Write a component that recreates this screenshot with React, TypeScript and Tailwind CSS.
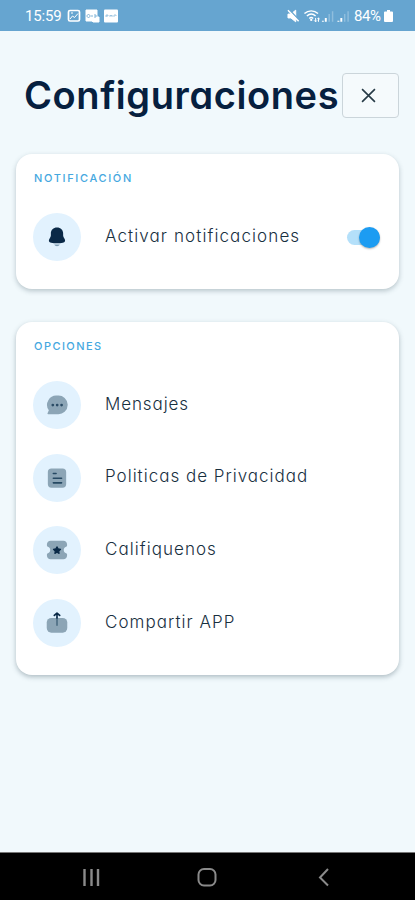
import { useState, type ReactNode } from "react";

function BellIcon() {
  return (
    <svg width="22" height="22" viewBox="0 0 24 24">
      <path d="M12 1.500C8 1.500 5.300 4.300 5.300 8.100v2.100c0 1.200-.5 2-1.200 3.200-1.800 2.900-.8 4.400 1.500 4.800 4 .8 8.800.8 12.800 0 2.300-.4 3.300-1.900 1.500-4.800-.7-1.200-1.200-2-1.200-3.200V8.100C18.700 4.300 16 1.500 12 1.500Z" fill="#0a2947" />
      <path d="M9 20.300h6c-.6 1.200-1.600 1.700-3 1.700s-2.400-.5-3-1.700Z" fill="#7d9bb2" />
    </svg>
  );
}

function MessageIcon() {
  return (
    <svg width="22" height="22" viewBox="0 0 24 24">
      <path d="M12.500 1.700A10.200 10.200 0 1 1 12.500 22H2.400c-.8 0-1-.7-.6-1.300l1.300-2.900A10.200 10.200 0 0 1 12.500 1.700Z" fill="#8ca5b6" />
      <circle cx="7.400" cy="12" r="1.500" fill="#2b4c66" />
      <circle cx="12.200" cy="12" r="1.500" fill="#2b4c66" />
      <circle cx="17" cy="12" r="1.500" fill="#2b4c66" />
    </svg>
  );
}

function DocumentIcon() {
  return (
    <svg width="22" height="22" viewBox="0 0 24 24">
      <rect x="2" y="1.500" width="20" height="21" rx="4" fill="#8ca5b6" />
      <path d="M8 7h3M8 12.300h9M8 17.300h9" stroke="#264963" strokeWidth="1.700" strokeLinecap="round" />
    </svg>
  );
}

function TicketIcon() {
  return (
    <svg width="22" height="22" viewBox="0 0 24 24">
      <path d="M5 2h14c2.200 0 4 1.500 4 4v1c0 .8-.4 1.200-1 1.400-3.500 1-3.500 6.200 0 7.200.6.2 1 .6 1 1.400v1c0 2.500-1.800 4-4 4H5c-2.200 0-4-1.500-4-4v-1c0-.8.4-1.200 1-1.400 3.500-1 3.500-6.200 0-7.200C1.400 8.200 1 7.800 1 7V6c0-2.500 1.800-4 4-4Z" fill="#8ca5b6" />
      <path d="m12 8.500 1.200 2.200 2.700.5-1.900 1.900.3 2.600-2.300-1.200-2.300 1.200.3-2.600-1.900-1.900 2.700-.5Z" fill="#0a2947" stroke="#0a2947" strokeWidth="1.200" strokeLinejoin="round" />
    </svg>
  );
}

function ShareIcon() {
  return (
    <svg width="22" height="22" viewBox="0 0 24 24">
      <rect x="0.800" y="6.500" width="22.400" height="16" rx="5" fill="#8ca5b6" />
      <path d="M12 6.500v8" stroke="#496a80" strokeWidth="1.700" strokeLinecap="round" />
      <path d="M12 6.500V2M9.100 3.800 12 1.200l2.900 2.600" fill="none" stroke="#0a2947" strokeWidth="1.800" strokeLinecap="round" strokeLinejoin="round" />
    </svg>
  );
}

function StatusBar() {
  return (
    <header className="flex h-[31px] shrink-0 items-center bg-[#66a5d0] pr-[22px] pl-[25px] pt-[1px] text-white">
      <span className="w-[37px] font-[Roboto,sans-serif] text-[15px] tracking-[-0.15px]">15:59</span>
      <svg className="ml-[5px]" width="52" height="14" viewBox="0 0 52 14">
        <rect x="1.500" y="1.500" width="11" height="10.500" rx="1.500" fill="none" stroke="white" strokeWidth="1.700" />
        <path d="m3 10 2.500-3 2 1.500L11 4.500M4 4h2" fill="none" stroke="white" />
        <path d="M19 1h11v7h2v5h-6l-1-1h-6Z" fill="white" stroke="white" strokeLinejoin="round" />
        <path d="M20 7c0-2 3-2 3 0s-3 2-3 0m4 0h2m1-1h2v2h-2" fill="none" stroke="#7fb3d7" />
        <rect x="37" y="0.500" width="14" height="13" rx="1" fill="white" />
        <path d="M39 8V6h2v1h-2m4 1V6l1 1 1-1v2m2 0V6h2v1" fill="none" stroke="#91bddc" strokeWidth=".8" />
      </svg>
      <svg className="ml-auto" width="64" height="16" viewBox="0 0 66 16">
        <path d="M1 6h3l5-4v12l-5-4H1Z" fill="white" stroke="white" />
        <path d="m2 1 11 12" stroke="#66a5d0" strokeWidth="1.500" />
        <path d="m1 2 11 11.500" stroke="white" strokeWidth="1.500" />
        <path d="M18 5.500c4-3.700 10-3.700 14 0M20.500 8c2.700-2.500 6.300-2.500 9 0M23 10.500c1.300-1.200 2.700-1.200 4 0" fill="none" stroke="white" strokeWidth="1.500" />
        <circle cx="25" cy="12" r="1.200" fill="white" />
        <path d="M29.500 10v4m-1.500-1.500 1.500 1.500 1.500-1.500M32.500 14v-4m-1.300 1.300 1.300-1.300 1.300 1.300" fill="none" stroke="white" />
        <path d="M37 13v1M40 10v4M53 13v1M56 10v4" stroke="white" strokeWidth="2" />
        <path d="M43.500 6v8M47 3v11M59.500 6v8M63 3v11" stroke="#8fbedd" strokeWidth="1.500" />
      </svg>
      <span className="ml-[3px] w-[29px] font-[Roboto,sans-serif] text-[15px] tracking-[-0.4px]">84%</span>
      <svg className="ml-[1px]" width="9" height="12" viewBox="0 0 9 12">
        <path d="M3 0h3v1.500h2q1 0 1 1V11q0 1-1 1H1q-1 0-1-1V2.500q0-1 1-1h2Z" fill="white" />
      </svg>
    </header>
  );
}

function Row({ icon, label, tracking, children }: { icon: ReactNode; label: string; tracking: string; children?: ReactNode }) {
  return (
    <div className="flex h-12 items-center">
      <span className="flex size-12 shrink-0 items-center justify-center rounded-full bg-[#e2f2fe]">{icon}</span>
      <span className={`ml-6 -mt-[1px] whitespace-nowrap text-[17px] font-light text-[#18303f] ${tracking}`}>{label}</span>
      {children}
    </div>
  );
}

const options = [
  { label: "Mensajes", icon: <MessageIcon />, tracking: "tracking-[0.9px]" },
  { label: "Politicas de Privacidad", icon: <DocumentIcon />, tracking: "tracking-[1px]" },
  { label: "Califiquenos", icon: <TicketIcon />, tracking: "tracking-[1.050px]" },
  { label: "Compartir APP", icon: <ShareIcon />, tracking: "tracking-[1.050px]" },
];

export default function App() {
  const [enabled, setEnabled] = useState(true);
  return (
    <div className="flex h-[900px] w-[415px] flex-col overflow-hidden bg-[#f1f9fc] font-[Inter,sans-serif] [font-feature-settings:'cv11']">
      <StatusBar />
      <main className="flex flex-1 flex-col px-4">
        <div className="mt-[42px] flex h-[45px] items-center justify-between pl-[8px]">
          <h1 className="whitespace-nowrap text-[38px] leading-[45px] font-semibold tracking-[0.6px] text-[#06203f]">Configuraciones</h1>
          <button aria-label="Cerrar" className="flex h-[45px] w-[57px] shrink-0 items-center justify-center rounded-[4px] border border-[#cbd5da] bg-[#f5fafc] pr-[4px] text-[#263a46]">
            <svg width="15" height="15" viewBox="0 0 14 14">
              <path d="m1 1 12 12M13 1 1 13" stroke="currentColor" strokeWidth="1.500" />
            </svg>
          </button>
        </div>

        <section className="mt-[36px] h-[135px] rounded-[16px] bg-white px-[17px] pt-[17px] shadow-[0_2px_5px_rgba(50,75,90,0.3)]">
          <h2 className="pl-[1px] text-[11px] leading-[15px] font-medium tracking-[1.650px] text-[#45a8df]">NOTIFICACIÓN</h2>
          <div className="mt-[27px]">
            <Row icon={<BellIcon />} label="Activar notificaciones" tracking="tracking-[1.100px]">
              <button role="switch" aria-label="Activar notificaciones" aria-checked={enabled} onClick={() => setEnabled(!enabled)} className={`mr-[2px] ml-auto flex h-[15px] w-[33px] shrink-0 items-center rounded-full bg-[#b4e0fa] ${enabled ? "justify-end" : "justify-start"}`}>
                <span className="size-[21px] shrink-0 rounded-full bg-[#1c9cf2] shadow-[0_1px_2px_rgba(0,0,0,0.3)]" />
              </button>
            </Row>
          </div>
        </section>

        <section className="mt-[33px] h-[353px] rounded-[16px] bg-white px-[17px] pt-[17px] shadow-[0_2px_5px_rgba(50,75,90,0.35)]">
          <h2 className="pl-[1px] text-[11px] leading-[15px] font-medium tracking-[1.450px] text-[#45a8df]">OPCIONES</h2>
          <div className="mt-[27px] flex flex-col gap-[24.700px]">
            {options.map((option) => <Row key={option.label} {...option} />)}
          </div>
        </section>
      </main>
      <nav className="flex h-12 shrink-0 items-center justify-center border-t border-[#777] bg-black pt-[2px]">
        <svg width="249" height="20" viewBox="0 0 249 20" fill="none" stroke="#8a8a8a" strokeWidth="2">
          <path d="M1.500 1v17M8.500 1v17M15 1v17" strokeWidth="2.400" />
          <rect x="115.500" y="1" width="17" height="16.500" rx="5.500" />
          <path d="m245 1-8 8.500 8 8" />
        </svg>
      </nav>
    </div>
  );
}
